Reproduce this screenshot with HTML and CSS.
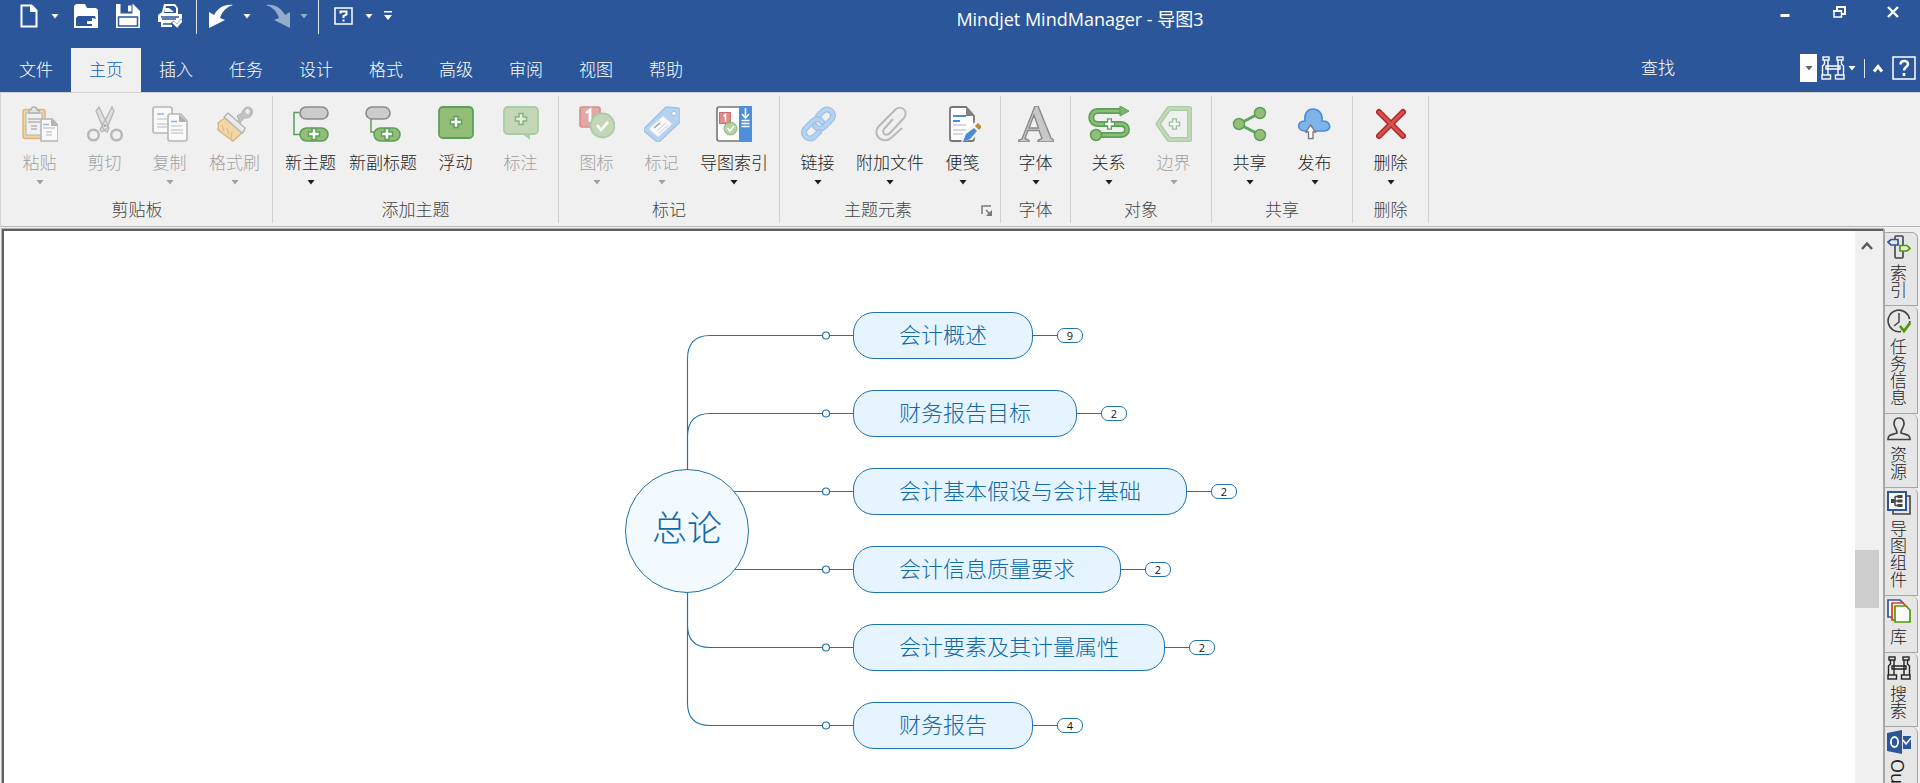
FILE: index.html
```html
<!DOCTYPE html>
<html lang="zh-CN">
<head>
<meta charset="utf-8">
<title>Mindjet MindManager - 导图3</title>
<link rel="stylesheet" href="styles.css">
</head>
<body>
<svg class="defs" aria-hidden="true">
  <symbol id="caret" viewBox="0 0 10 6"><path d="M1.500 1h7L5 5.500z" fill="currentColor"/></symbol>
  <symbol id="binoc" viewBox="0 0 24 24"><g fill="none" stroke="currentColor" stroke-width="1.400"><rect x="2" y="1" width="6" height="3"/><rect x="16" y="1" width="6" height="3"/><path d="M3.500 4v4L1.500 10v9M7 4v15M20.500 4v4l2 2v9M17 4v15"/><rect x="1" y="19" width="8.500" height="4"/><rect x="14.500" y="19" width="8.500" height="4"/><path d="M5 10h14v3H5z"/></g></symbol>
  <symbol id="plus" viewBox="0 0 14 14"><path d="M5 1.500h4V5h3.500v4H9v3.500H5V9H1.500V5H5z" fill="#fff" stroke="#5ba058" stroke-width="1.500"/></symbol>
</svg>

<header class="top">
  <div class="titlebar">
    <div class="qat">
      <button class="ico" aria-label="新建"><svg viewBox="0 0 24 24"><path d="M4.500 1.500h10l5 5v16h-15z" fill="none" stroke="#fff" stroke-width="2"/><path d="M13 1v7h7z" fill="#fff"/></svg></button>
      <button class="drop" aria-label="新建选项"><svg><use href="#caret"/></svg></button>
      <button class="ico gap-s" aria-label="打开"><svg viewBox="0 0 24 24"><path d="M0 2l2-2h9l2 4h9l2 2v18H0z" fill="#fff"/><path d="M2 14l2-2h17l1 3-4-1v3h-4v3h4v2H2z" fill="#2b579a"/><path d="M13 17h5v-3l5 4.500-5 4.500v-3h-5z" fill="#fff"/></svg></button>
      <button class="ico gap-m" aria-label="保存"><svg viewBox="0 0 24 24"><path d="M0 0h17l7 7v17H0z" fill="#fff"/><path d="M4.500 0h12v9.500h-12z" fill="#2b579a"/><path d="M12 1.500h3.500v6H12z" fill="#fff"/><path d="M2.500 13h19v9h-19z" fill="#fff" stroke="#2b579a" stroke-width="1.500"/></svg></button>
      <button class="ico gap-m" aria-label="打印"><svg viewBox="0 0 24 24"><path d="M6 0h11l3 4v6h4v6l-2 4-8 1v2H3v-5H0v-7l4-3z" fill="#fff"/><path d="M8 2h8l2 2v5H6z" fill="#2b579a"/><path d="M7 4h4l5 4H7z" fill="#fff"/><path d="M3 13h18M4 15h14M5 20h9" stroke="#2b579a" stroke-width="1.600"/><path d="M14 18l5 5 6-7" fill="none" stroke="#2b579a" stroke-width="4.500"/><path d="M15 18l4 4 5-6" fill="none" stroke="#fff" stroke-width="2.500"/></svg></button>
      <i class="vline gap-s"></i>
      <button class="ico gap-xs" aria-label="撤消"><svg viewBox="0 0 24 24"><path d="M0 8l5 3C9 4 15 0 24 1c-7 2-11 7-13 13l5 2L0 24z" fill="#fff"/></svg></button>
      <button class="drop" aria-label="撤消选项"><svg><use href="#caret"/></svg></button>
      <button class="ico gap-s faded" aria-label="恢复"><svg viewBox="0 0 24 24"><path d="M24 8l-5 3C15 4 9 0 0 1c7 2 11 7 13 13l-5 2 16 8z" fill="#fff"/></svg></button>
      <button class="drop faded" aria-label="恢复选项"><svg><use href="#caret"/></svg></button>
      <i class="vline"></i>
      <button class="ico gap-xs" aria-label="帮助"><svg viewBox="0 0 24 24"><rect x="4" y="4" width="17" height="16" fill="none" stroke="#fff" stroke-width="1.500"/><path d="M9.500 9.500V7.500h6v3l-3 1.500v2M12.500 15.500v2" fill="none" stroke="#fff" stroke-width="2"/></svg></button>
      <button class="drop" aria-label="帮助选项"><svg><use href="#caret"/></svg></button>
      <button class="drop" aria-label="自定义工具栏"><svg viewBox="0 0 10 10"><path d="M1 0h8v1.500H1zM1 4h8L5 9z" fill="#fff"/></svg></button>
    </div>
    <h1 class="title">Mindjet MindManager - 导图3</h1>
    <div class="winbtns">
      <button aria-label="最小化"><svg viewBox="0 0 14 14"><path d="M2.500 9h9v3h-9z" fill="#fff"/></svg></button>
      <button aria-label="还原"><svg viewBox="0 0 14 14"><path d="M5 5V2h8v7H9.500M5 2h8" fill="none" stroke="#fff" stroke-width="2"/><path d="M2 6h7.500v6H2z" fill="none" stroke="#fff" stroke-width="1.500"/><path d="M1 5h9v2H1z" fill="#fff"/></svg></button>
      <button aria-label="关闭"><svg viewBox="0 0 14 14"><path d="M2 2l10 10M12 2L2 12" stroke="#fff" stroke-width="2.400"/></svg></button>
    </div>
  </div>
  <div class="tabrow">
    <nav class="tabs">
      <button>文件</button><button class="active">主页</button><button>插入</button><button>任务</button><button>设计</button><button>格式</button><button>高级</button><button>审阅</button><button>视图</button><button>帮助</button>
    </nav>
    <div class="find">
      <input type="text" aria-label="查找" placeholder="查找">
      <button class="findhist" aria-label="查找记录"><svg class="caret"><use href="#caret"/></svg></button>
      <button class="ico" aria-label="搜索"><svg><use href="#binoc"/></svg></button>
      <button class="drop" aria-label="搜索选项"><svg><use href="#caret"/></svg></button>
      <i class="vshort"></i>
      <button class="collapse" aria-label="折叠功能区"><svg viewBox="0 0 12 12"><path d="M2 9.500l4-5 4 5" fill="none" stroke="#fff" stroke-width="3"/></svg></button>
      <button class="ico" aria-label="帮助"><svg viewBox="0 0 24 24"><rect x="1" y="1" width="22" height="22" fill="none" stroke="#fff" stroke-width="1.500"/><path d="M8.500 8.500c0-4.500 7.500-4.500 7.500-.5 0 3-4 3-4 6.500M12 17v3" fill="none" stroke="#fff" stroke-width="2.500"/></svg></button>
    </div>
  </div>
</header>

<section class="ribbon">
  <div class="group"><div class="cmds">
    <button class="cmd off"><svg viewBox="0 0 36 36"><rect x="1" y="3.500" width="22" height="29" rx="2" fill="#efd5a3" stroke="#dcb780" stroke-width="1.500"/><rect x="4" y="7" width="16" height="22" fill="#f0f0f0" stroke="#b4b4b4"/><path d="M7 7V4h2c0-4 6-4 6 0h2v3z" fill="#e4e4e4" stroke="#b0b0b0" stroke-width="1.300"/><path d="M6 13h12M6 16h12M9 20h6M9 23h6" stroke="#b4b4b4" stroke-width="1.300"/><path d="M19 13h11l6 6v16H19z" fill="#fafafa" stroke="#b4b4b4" stroke-width="1.500"/><path d="M29 12v8h7z" fill="#b4b4b4"/><path d="M21 18.500h6" stroke="#8fb6e6" stroke-width="1.500"/><path d="M21 22h12M24 26h6M24 29h6" stroke="#b4b4b4"/></svg><span>粘贴</span><svg class="caret"><use href="#caret"/></svg></button>
    <button class="cmd off"><svg viewBox="0 0 36 36"><path d="M12 1L9 5l8 19 3 2 2-4zM25 1l2 4-7 17-5 4-2-2z" fill="#dedede" stroke="#b6b6b6" stroke-width="1.300"/><circle cx="6.500" cy="29" r="5.300" fill="none" stroke="#b8b8b8" stroke-width="2.500"/><circle cx="29.500" cy="29" r="5.300" fill="none" stroke="#b8b8b8" stroke-width="2.500"/><circle cx="18" cy="19.500" r="1.500" fill="#a8a8a8"/></svg><span>剪切</span></button>
    <button class="cmd off"><svg viewBox="0 0 36 36"><rect x="1" y="1" width="19" height="26" rx="2" fill="#fafafa" stroke="#b6b6b6" stroke-width="1.600"/><path d="M5 8h7" stroke="#8fb6e6" stroke-width="1.500"/><path d="M5 13h10M5 18h10M5 21h10" stroke="#d0d0d0" stroke-width="1.300"/><path d="M18 8h11l6 7v18q0 2-2 2H18q-2 0-2-2V10q0-2 2-2z" fill="#fafafa" stroke="#b6b6b6" stroke-width="1.600"/><path d="M27 8v8h8z" fill="#b0b0b0"/><path d="M19 15.500h6" stroke="#8fb6e6" stroke-width="1.500"/><path d="M19 20h11M19 24h12M19 27h12" stroke="#d0d0d0" stroke-width="1.300"/></svg><span>复制</span><svg class="caret"><use href="#caret"/></svg></button>
    <button class="cmd off"><svg viewBox="0 0 36 36"><path d="M20 10l5-3c2-9 13-7 10 1-1 4-5 4-8 4l-4 5z" fill="#c2c2c2" stroke="#b0b0b0"/><ellipse cx="30.500" cy="5.500" rx="2" ry="2.600" fill="#f0f0f0"/><path d="M8 12Q3 15 1 17q1 4 0 7l15 11 10-9z" fill="#f1d7a5" stroke="#d9b77e" stroke-width="1.400"/><path d="M5 19l2 6M10 22l2 7M15 26l-1 7" stroke="#d9b77e"/><path d="M7 11l4-4 17 15q-1 4-3 5z" fill="#ececec" stroke="#b6b6b6" stroke-width="1.500"/></svg><span>格式刷</span><svg class="caret"><use href="#caret"/></svg></button>
  </div><h2>剪贴板</h2></div>

  <div class="group"><div class="cmds">
    <button class="cmd"><svg viewBox="0 0 36 36"><path d="M6.500 6.500H1v22h6" fill="none" stroke="#5ba058" stroke-width="1.500"/><rect x="7" y="1" width="28" height="12" rx="6" fill="#ccc" stroke="#8a8a8a" stroke-width="1.600"/><rect x="7" y="22" width="28" height="13" rx="6.500" fill="#94bd78" stroke="#5ba058" stroke-width="1.600"/><use href="#plus" x="14" y="21" width="14" height="14"/></svg><span>新主题</span><svg class="caret"><use href="#caret"/></svg></button>
    <button class="cmd wide"><svg viewBox="0 0 36 36"><path d="M6 12v14h4" fill="none" stroke="#5ba058" stroke-width="1.500"/><rect x="1" y="1" width="24" height="12" rx="6" fill="#ccc" stroke="#8a8a8a" stroke-width="1.600"/><rect x="9" y="22" width="26" height="13" rx="6.500" fill="#94bd78" stroke="#5ba058" stroke-width="1.600"/><use href="#plus" x="15" y="21" width="14" height="14"/></svg><span>新副标题</span></button>
    <button class="cmd"><svg viewBox="0 0 36 36"><rect x="1" y="1" width="34" height="31" rx="4" fill="#94bd78" stroke="#5ba058" stroke-width="1.800"/><use href="#plus" x="11" y="9" width="14" height="14"/></svg><span>浮动</span></button>
    <button class="cmd off"><svg viewBox="0 0 36 36"><path d="M18 27h9v7z" fill="#adcfab"/><rect x="1" y="1" width="34" height="27" rx="4" fill="#c3d6b5" stroke="#a8cca6" stroke-width="1.800"/><g opacity=".6"><use href="#plus" x="11" y="6" width="14" height="14"/></g></svg><span>标注</span></button>
  </div><h2>添加主题</h2></div>

  <div class="group"><div class="cmds">
    <button class="cmd off"><svg viewBox="0 0 36 36"><rect x="1" y="1" width="20" height="20" rx="2" fill="#e1a6a6" stroke="#d88e8e" stroke-width="1.600"/><path d="M7 7l4-3v12" fill="none" stroke="#fff" stroke-width="2.800"/><circle cx="23.500" cy="19.500" r="12" fill="#c3d6b5" stroke="#a8cca6" stroke-width="1.800"/><path d="M18 19l4 5 7-8" fill="none" stroke="#fff" stroke-width="2.600"/></svg><span>图标</span><svg class="caret"><use href="#caret"/></svg></button>
    <button class="cmd off"><svg viewBox="0 0 36 36"><path d="M0 23L21 2q1-1 2-1l11 1q2 0 2 2v11q0 1-1 2L16 35q-2 2-4 0L0 25z" fill="#b6d2ee" stroke="#a3c2ea" stroke-width="1.600"/><circle cx="30" cy="7.500" r="2.300" fill="#fff" stroke="#a3c2ea" stroke-width="1.200"/><path d="M6 22l12-11q1-1 2 0l7 6q1 1 0 2L15 30q-1 1-2 0l-7-6q-1-1 0-2z" fill="#fafafa" stroke="#d9e5f2"/><path d="M10 22l6-5" stroke="#999" stroke-width="1.300"/><path d="M13 25l9-8M15 27l9-8" stroke="#ccc"/></svg><span>标记</span><svg class="caret"><use href="#caret"/></svg></button>
    <button class="cmd wide"><svg viewBox="0 0 36 36"><path d="M24 1H3Q1 1 1 3v30q0 2 2 2h21" fill="#fff" stroke="#777" stroke-width="1.600"/><path d="M23 0h13v36H23z" fill="#4e8fd9"/><path d="M29.500 2v9M26 8l3.500 4L33 8M25.500 14.500h8M25.500 17.500h8M25.500 20.500h8" stroke="#fff" stroke-width="1.500" fill="none"/><rect x="3.500" y="6.500" width="11" height="11" fill="#e08c8c" stroke="#cf6d6d"/><path d="M7.500 10l2-1.500v7" fill="none" stroke="#fff" stroke-width="1.600"/><circle cx="14.500" cy="22.500" r="6.500" fill="#a9c990" fill-opacity=".85" stroke="#86b97f"/><path d="M11.500 22l2.500 3 4-5" fill="none" stroke="#fff" stroke-width="1.800"/></svg><span>导图索引</span><svg class="caret"><use href="#caret"/></svg></button>
  </div><h2>标记</h2></div>

  <div class="group has-launcher"><div class="cmds">
    <button class="cmd"><svg viewBox="0 0 36 36"><g fill="none" stroke-linecap="round"><path d="M18 10l4-4c6-7 15 2 9 8l-7 7c-3 3-7 2-9-1" stroke="#9dc0e8" stroke-width="6"/><path d="M18 10l4-4c6-7 15 2 9 8l-7 7c-3 3-7 2-9-1" stroke="#b5d3ee" stroke-width="3.500"/><path d="M19 26l-4 4c-6 7-15-2-9-8l7-7c3-3 7-2 9 1" stroke="#9dc0e8" stroke-width="6"/><path d="M19 26l-4 4c-6 7-15-2-9-8l7-7c3-3 7-2 9 1" stroke="#b5d3ee" stroke-width="3.500"/></g></svg><span>链接</span><svg class="caret"><use href="#caret"/></svg></button>
    <button class="cmd wide"><svg viewBox="0 0 36 36"><path d="M30 22L19 32c-8 7-20-3-12-12L23 4c6-6 14 1 9 8L18 27c-4 4-9 0-6-4L21 13" fill="none" stroke="#b8b8b8" stroke-width="2"/></svg><span>附加文件</span><svg class="caret"><use href="#caret"/></svg></button>
    <button class="cmd"><svg viewBox="0 0 36 36"><path d="M7 1h14l8 9v23q0 2-2 2H7q-2 0-2-2V3q0-2 2-2z" fill="#fff" stroke="#777" stroke-width="1.800"/><path d="M21 0v10h9z" fill="#808080"/><path d="M8 10h13M8 15h7" stroke="#4b8bd7" stroke-width="1.800"/><path d="M8 19h13M8 24h13M8 28h10" stroke="#ccc" stroke-width="1.300"/><path d="M16 36l4-11 10-9 7 6-9 11z" fill="#f4f4f4"/><path d="M18 36l3-8 8-6 3 3-7 8z" fill="#4b8bd7"/><path d="M33 17l4 4-3 3-4-4z" fill="#c08a35"/></svg><span>便笺</span><svg class="caret"><use href="#caret"/></svg></button>
  </div><h2>主题元素</h2><button class="launcher" aria-label="主题元素选项"><svg viewBox="0 0 12 12"><path d="M1 9V1h9M5 5l5 5" fill="none" stroke="#777" stroke-width="1.500"/><path d="M11 5v6H5z" fill="#777"/></svg></button></div>

  <div class="group narrow"><div class="cmds">
    <button class="cmd"><svg viewBox="0 0 36 36"><path d="M0 34.500l4-1.500L17 0h3l13 32 3 2.500V36H20v-1.500l4-2-3-8H10l-3 8 4 2V36H0zM11 22h9.500L16 9z" fill="#c8c8c8" fill-rule="evenodd" stroke="#8a8a8a" stroke-width="1.400"/></svg><span>字体</span><svg class="caret"><use href="#caret"/></svg></button>
  </div><h2>字体</h2></div>

  <div class="group"><div class="cmds">
    <button class="cmd"><svg class="rel" viewBox="0 0 42 36"><g fill="none"><path d="M34 5H10c-9 0-9 13 0 13h23c8 0 8 11 0 11H8" stroke="#5ba058" stroke-width="6"/><path d="M34 5H10c-9 0-9 13 0 13h23c8 0 8 11 0 11H8" stroke="#8dbd74" stroke-width="2.600"/></g><path d="M32 0l9 5-9 5z" fill="#7db66b" stroke="#5ba058"/><circle cx="8" cy="29" r="5.500" fill="#94bd78" stroke="#5ba058" stroke-width="1.500"/><use href="#plus" x="15" y="11" width="13" height="14"/></svg><span>关系</span><svg class="caret"><use href="#caret"/></svg></button>
    <button class="cmd off"><svg class="rel" viewBox="0 0 42 36"><path d="M16 2.500h20.500v31H16L5 18z" fill="none" stroke="#a8cca6" stroke-width="5" stroke-linejoin="round"/><path d="M16 2.500h20.500v31H16L5 18z" fill="none" stroke="#c3d9b5" stroke-width="2.500"/><g opacity=".55"><use href="#plus" x="15" y="11" width="13" height="14"/></g></svg><span>边界</span><svg class="caret"><use href="#caret"/></svg></button>
  </div><h2>对象</h2></div>

  <div class="group"><div class="cmds">
    <button class="cmd"><svg viewBox="0 0 36 36"><path d="M28 7L7 18l21 11" fill="none" stroke="#62a65e" stroke-width="3"/><g fill="#94bd78" stroke="#5ba058" stroke-width="1.500"><circle cx="7" cy="18" r="5.500"/><circle cx="28" cy="7" r="5.500"/><circle cx="28" cy="29" r="5.500"/></g></svg><span>共享</span><svg class="caret"><use href="#caret"/></svg></button>
    <button class="cmd"><svg viewBox="0 0 36 36"><path d="M8 25C0 25-1 15 8 15 7 7 11 3 16 3s10 4 9 12c10 0 10 10 2 10z" fill="#7fb4e8" stroke="#4b8bd7" stroke-width="1.600"/><path d="M13.500 19l5 7h-2.500v6.500h-4.500V26H9z" fill="#fff" stroke="#777" stroke-width="1.300"/></svg><span>发布</span><svg class="caret"><use href="#caret"/></svg></button>
  </div><h2>共享</h2></div>

  <div class="group"><div class="cmds">
    <button class="cmd"><svg viewBox="0 0 36 36"><g stroke-linecap="round"><path d="M6 6l24 24M30 6L6 30" stroke="#b9211f" stroke-width="6"/><path d="M6 6l24 24M30 6L6 30" stroke="#d35552" stroke-width="3"/></g></svg><span>删除</span><svg class="caret"><use href="#caret"/></svg></button>
  </div><h2>删除</h2></div>
</section>

<div class="work">
  <main class="doc">
    <div class="canvas">
      <svg class="links" aria-hidden="true"><g fill="none" stroke="#1e72b0" stroke-width="1.100">
        <path d="M683.500 300V128Q683.500 104.500 706 104.500H851"/><path d="M683.500 300V206Q683.500 182.500 706 182.500H851"/>
        <path d="M683.500 260.500H851M683.500 338.500H851"/>
        <path d="M683.500 300V394Q683.500 416.500 706 416.500H851"/><path d="M683.500 300V472Q683.500 494.500 706 494.500H851"/></g>
        <g fill="#fff" stroke="#1e72b0" stroke-width="1.200"><circle cx="822" cy="104.500" r="3.500"/><circle cx="822" cy="182.500" r="3.500"/><circle cx="822" cy="260.500" r="3.500"/><circle cx="822" cy="338.500" r="3.500"/><circle cx="822" cy="416.500" r="3.500"/><circle cx="822" cy="494.500" r="3.500"/></g>
      </svg>
      <div class="root">总论</div>
      <div class="topic t1"><span class="box">会计概述</span><button class="count">9</button></div>
      <div class="topic t2"><span class="box">财务报告目标</span><button class="count">2</button></div>
      <div class="topic t3"><span class="box">会计基本假设与会计基础</span><button class="count">2</button></div>
      <div class="topic t4"><span class="box">会计信息质量要求</span><button class="count">2</button></div>
      <div class="topic t5"><span class="box">会计要素及其计量属性</span><button class="count">2</button></div>
      <div class="topic t6"><span class="box">财务报告</span><button class="count">4</button></div>
    </div>
    <div class="scroll">
      <button aria-label="向上滚动"><svg viewBox="0 0 12 10"><path d="M1 8l5-5.500L11 8" fill="none" stroke="#5a5a5a" stroke-width="2.500"/></svg></button>
      <div class="above"></div><div class="thumb"></div><div class="below"></div>
    </div>
  </main>
  <aside class="side">
    <button><svg viewBox="0 0 24 24"><rect x="8" y="1" width="8" height="22" rx="1" fill="none" stroke="#444" stroke-width="1.600"/><path d="M11 4.500H4L1 7l3 3h7z" fill="#e6e6e6" stroke="#2b579a" stroke-width="1.700"/><path d="M13 10.500h7l3 3-3 2.500h-7z" fill="#e6e6e6" stroke="#4e9a06" stroke-width="1.700"/></svg><span>索引</span></button>
    <button><svg viewBox="0 0 24 24"><path d="M22.500 10A10.800 10.800 0 1 0 14 22.500M22.800 12q0 2-.6 3.500" fill="none" stroke="#444" stroke-width="1.600"/><path d="M12 4v9l-5 4" fill="none" stroke="#444" stroke-width="1.500"/><path d="M13 17l4 5 6-8" fill="none" stroke="#4e9a06" stroke-width="2.800"/></svg><span>任务信息</span></button>
    <button><svg viewBox="0 0 24 24"><path d="M12 1c-5 0-5 5-5 6 0 3 3 5 3 9-5 2-9 1-9 6.500h22C23 17 19 18 14 16c0-4 3-6 3-9 0-1 0-6-5-6z" fill="none" stroke="#444" stroke-width="1.700"/></svg><span>资源</span></button>
    <button><svg viewBox="0 0 24 24"><path d="M19 5h4v18H6v-4" fill="none" stroke="#444" stroke-width="1.600"/><rect x="1" y="1" width="18" height="18" fill="#fafafa" stroke="#2b579a" stroke-width="2"/><path d="M4 10h4M8 5.500v9M8 5.500h3M8 14.500h3M8 10h3" stroke="#444" stroke-width="1.500" fill="none"/><path d="M10.500 4h5v3h-5zM10.500 8.500h5v3h-5zM10.500 13h5v3h-5zM4 8h3.500v4H4z" fill="#444"/></svg><span>导图组件</span></button>
    <button><svg viewBox="0 0 24 24"><path d="M1 1h12l3 3v14H1z" fill="#fafafa" stroke="#2b579a" stroke-width="1.700"/><path d="M5 4h11l4 4v13H5z" fill="#fafafa" stroke="#e8301c" stroke-width="1.700"/><path d="M8 7h11l4 4v12H8z" fill="#fafafa" stroke="#4e9a06" stroke-width="1.700"/></svg><span>库</span></button>
    <button><svg><use href="#binoc"/></svg><span>搜索</span></button>
    <button><svg viewBox="0 0 24 24"><path d="M0 3l15-3v24L0 21z" fill="#2b579a"/><ellipse cx="7.500" cy="12" rx="3.600" ry="5" fill="none" stroke="#fff" stroke-width="1.800"/><path d="M16 6h8v13h-8z" fill="#2b579a"/><path d="M16 10l3 4 5-6" fill="none" stroke="#fff" stroke-width="1.500"/></svg><span class="latin">Outlook</span></button>
  </aside>
</div>
</body>
</html>
```

FILE: styles.css
```css
* { box-sizing: border-box; }
html, body { height: 100%; }
body {
  margin: 0;
  display: flex;
  flex-direction: column;
  overflow: hidden;
  background: #f0f0f0;
  font: 17px/24px "Noto Sans CJK SC", sans-serif;
  font-weight: 300;
  color: #1c1c1c;
}
button, input { font: inherit; color: inherit; background: none; border: 0; padding: 0; margin: 0; }
h1, h2 { margin: 0; font: inherit; }
svg { display: block; }
.defs { position: absolute; width: 0; height: 0; }

/* title bar and tabs */
.top { background: #2b579a; color: #fff; }
.titlebar { display: flex; height: 48px; }
.qat { display: flex; align-items: flex-start; gap: 9px; width: 402px; padding-left: 17px; }
.ico, .ico svg { width: 24px; height: 24px; }
.qat .ico { margin-top: 4px; }
.qat .drop { height: 24px; margin-top: 4px; }
.drop { display: flex; align-items: center; width: 10px; }
.drop svg { width: 10px; height: 6px; }
.drop:last-child svg { height: 10px; }
.find .drop svg { height: 6px; }
.qat .gap-xs { margin-left: 3px; }
.qat .gap-s { margin-left: 5px; }
.qat .gap-m { margin-left: 9px; }
.faded { opacity: .5; }
.vline { width: 1px; height: 34px; background: #dfe3ea; }
.title { flex: 1; text-align: center; font-family: "Open Sans", "Noto Sans CJK SC", sans-serif; font-size: 18px; font-weight: 400; line-height: 38px; }
.winbtns { display: flex; }
.winbtns button { display: flex; justify-content: center; width: 54px; height: 32px; padding-top: 5px; }
.winbtns svg { width: 14px; height: 14px; }
.tabrow { display: flex; justify-content: space-between; }
.tabs { display: flex; padding-left: 1px; }
.tabs button { width: 70px; height: 44px; padding-bottom: 2px; }
.tabs .active { background: #f0f0f0; color: #0a62c4; }
.find { display: flex; align-items: center; padding: 0 4px 4px 0; }
.find input { width: 159px; height: 28px; padding-bottom: 3px; color: #fff; outline: 0; }
.find input::placeholder { color: #fff; opacity: 1; }
.findhist { display: flex; align-items: center; justify-content: center; width: 17px; height: 28px; margin-right: 4px; background: #fff; color: #666; }
.find .drop { margin: 0 7px 0 2px; }
.vshort { width: 1px; height: 19px; background: #dfe3ea; }
.collapse { margin: 0 8px 0 7px; }
.collapse svg { width: 12px; height: 12px; }
.caret { width: 10px; height: 6px; }

/* ribbon */
.ribbon { display: flex; border-top: 1px solid #d4d4d4; border-left: 1px solid #d4d4d4; border-bottom: 1px solid #b8b8b8; padding: 3px 0 3px 1px; }
.group { position: relative; height: 127px; padding: 10px 5px 0; border-right: 1px solid #d0d0d0; }
.group.narrow { padding: 10px 2px 0; }
.cmds { display: flex; }
.cmd { display: flex; flex-direction: column; align-items: center; width: 65px; height: 91px; }
.cmd.wide { width: 80px; }
.cmd > svg:first-child { width: 36px; height: 36px; margin-bottom: 8px; }
.cmd > svg.rel { width: 42px; }
.cmd .caret { margin-top: 5px; }
.cmd.off { color: #a0a0a0; }
.group h2 { color: #444; text-align: center; }
.has-launcher h2 { padding-right: 24px; }
.launcher { position: absolute; right: 7px; bottom: 6px; }
.launcher svg { width: 12px; height: 12px; }

/* workspace */
.work { flex: 1; display: flex; min-height: 0; padding-top: 2px; }
.doc { flex: 1; display: flex; min-width: 0; margin-left: 2px; border-left: 2px solid #5f5f5f; border-top: 2px solid #5f5f5f; outline: 1px solid #b4b4b4; background: #fff; }
.canvas { position: relative; flex: 1; overflow: hidden; }
.links { position: absolute; width: 100%; height: 100%; }
.root {
  position: absolute; left: 621px; top: 238px; width: 124px; height: 124px;
  display: flex; align-items: center; justify-content: center; padding-bottom: 10px;
  border: 1px solid #1e72b0; border-radius: 50%; background: #f2f9ff; color: #1169a8; font-size: 35px;
}
.topic { position: absolute; left: 849px; display: flex; align-items: center; }
.t1 { top: 81px; } .t2 { top: 159px; } .t3 { top: 237px; } .t4 { top: 315px; } .t5 { top: 393px; } .t6 { top: 471px; }
.box { height: 47px; padding: 0 45px; border: 1px solid #1e72b0; border-radius: 21px; background: #e6f4ff; color: #1169a8; font-size: 22px; line-height: 40px; white-space: nowrap; }
.topic::after { content: ""; width: 24px; height: 1px; background: #1e72b0; order: 1; }
.count { order: 2; width: 26px; height: 15px; border: 1px solid #1e72b0; border-radius: 7px; background: #fff; color: #111; font: 11px/13px "Open Sans", sans-serif; }
.scroll { display: flex; flex-direction: column; width: 28px; padding-right: 4px; background: #f0f0f0; }
.scroll button { display: flex; justify-content: center; padding: 10px 0; }
.scroll button svg { width: 12px; height: 10px; }
.above { flex: 289; }
.thumb { flex: 58; background: #cdcdcd; }
.below { flex: 175; }
.side { display: flex; flex-direction: column; width: 37px; padding: 3px 2px 0 0; border-left: 2px solid #a6a6a6; overflow: hidden; }
.side button { display: flex; flex: none; flex-direction: column; align-items: center; gap: 5px; padding: 3px 4px 7px 0; background: #e6e6e6; border: 1px solid #a6a6a6; border-width: 0 1px 1px 0; border-top-right-radius: 6px; color: #222; }
.side button:first-child { padding-top: 2px; border-top-width: 1px; }
.side svg { width: 24px; height: 24px; }
.side span { writing-mode: vertical-rl; line-height: 24px; padding-right: 2px; }
.side .latin { font-family: "Open Sans", sans-serif; font-size: 18px; font-weight: 400; }
```
